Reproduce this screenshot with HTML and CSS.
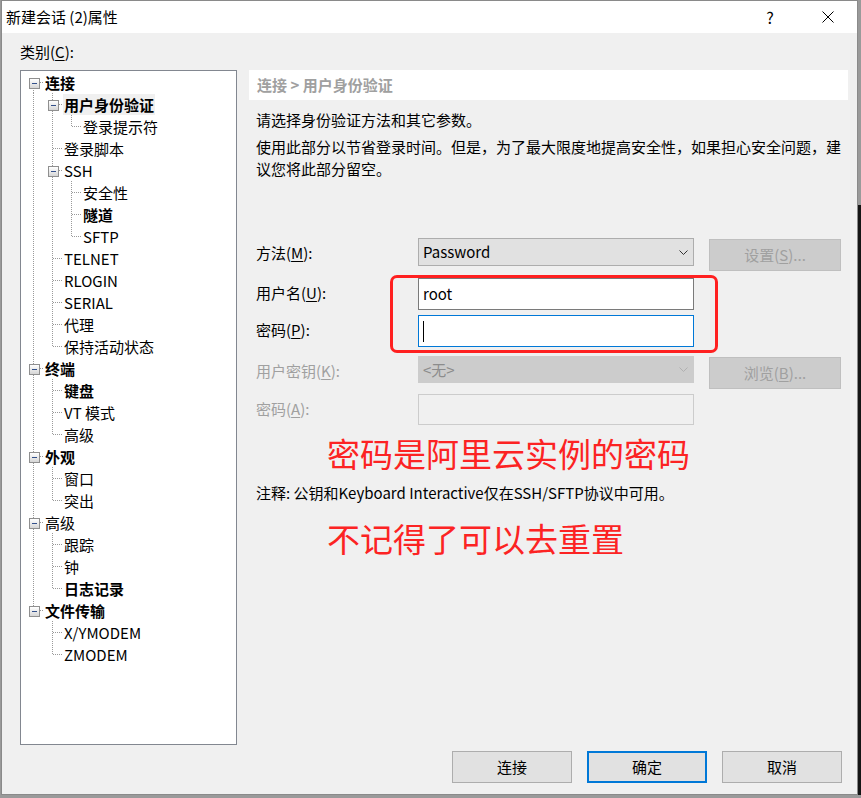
FILE: index.html
```html
<!DOCTYPE html>
<html lang="zh-CN">
<head>
    <meta charset="UTF-8">
    <title>新建会话 (2)属性</title>
    <link rel="stylesheet" href="styles.css">
</head>
<body>

<div class="window">
    <div class="titlebar">
        <div class="title">新建会话 (2)属性</div>
        <div class="capbtn">?</div>
        <div class="capbtn">
            <svg width="12" height="12" viewBox="0 0 12 12"><path d="M0.5 0.5 L11.5 11.5 M11.5 0.5 L0.5 11.5" stroke="#000" stroke-width="1" fill="none"/></svg>
        </div>
    </div>

    <div class="main">
        <div class="cat_label">类别(<u>C</u>):</div>
        <div></div>

        <div class="tree">
            <div class="row"><span class="cell first"><b class="box"></b></span><span class="t bold">连接</span></div>
            <div class="row"><span class="cell pipe"></span><span class="cell tee"><b class="box"></b></span><span class="t bold sel">用户身份验证</span></div>
            <div class="row"><span class="cell pipe"></span><span class="cell pipe"></span><span class="cell elbow"></span><span class="t">登录提示符</span></div>
            <div class="row"><span class="cell pipe"></span><span class="cell tee"></span><span class="t">登录脚本</span></div>
            <div class="row"><span class="cell pipe"></span><span class="cell tee"><b class="box"></b></span><span class="t">SSH</span></div>
            <div class="row"><span class="cell pipe"></span><span class="cell pipe"></span><span class="cell tee"></span><span class="t">安全性</span></div>
            <div class="row"><span class="cell pipe"></span><span class="cell pipe"></span><span class="cell tee"></span><span class="t bold">隧道</span></div>
            <div class="row"><span class="cell pipe"></span><span class="cell pipe"></span><span class="cell elbow"></span><span class="t">SFTP</span></div>
            <div class="row"><span class="cell pipe"></span><span class="cell tee"></span><span class="t">TELNET</span></div>
            <div class="row"><span class="cell pipe"></span><span class="cell tee"></span><span class="t">RLOGIN</span></div>
            <div class="row"><span class="cell pipe"></span><span class="cell tee"></span><span class="t">SERIAL</span></div>
            <div class="row"><span class="cell pipe"></span><span class="cell tee"></span><span class="t">代理</span></div>
            <div class="row"><span class="cell pipe"></span><span class="cell elbow"></span><span class="t">保持活动状态</span></div>
            <div class="row"><span class="cell tee"><b class="box"></b></span><span class="t bold">终端</span></div>
            <div class="row"><span class="cell pipe"></span><span class="cell tee"></span><span class="t bold">键盘</span></div>
            <div class="row"><span class="cell pipe"></span><span class="cell tee"></span><span class="t">VT 模式</span></div>
            <div class="row"><span class="cell pipe"></span><span class="cell elbow"></span><span class="t">高级</span></div>
            <div class="row"><span class="cell tee"><b class="box"></b></span><span class="t bold">外观</span></div>
            <div class="row"><span class="cell pipe"></span><span class="cell tee"></span><span class="t">窗口</span></div>
            <div class="row"><span class="cell pipe"></span><span class="cell elbow"></span><span class="t">突出</span></div>
            <div class="row"><span class="cell tee"><b class="box"></b></span><span class="t">高级</span></div>
            <div class="row"><span class="cell pipe"></span><span class="cell tee"></span><span class="t">跟踪</span></div>
            <div class="row"><span class="cell pipe"></span><span class="cell tee"></span><span class="t">钟</span></div>
            <div class="row"><span class="cell pipe"></span><span class="cell elbow"></span><span class="t bold">日志记录</span></div>
            <div class="row"><span class="cell elbow"><b class="box"></b></span><span class="t bold">文件传输</span></div>
            <div class="row"><span class="cell"></span><span class="cell tee"></span><span class="t">X/YMODEM</span></div>
            <div class="row"><span class="cell"></span><span class="cell elbow"></span><span class="t">ZMODEM</span></div>
        </div>

        <div class="panel">
            <div class="panel_head">连接 &gt; 用户身份验证</div>
            <div class="intro">请选择身份验证方法和其它参数。</div>
            <div class="desc">使用此部分以节省登录时间。但是，为了最大限度地提高安全性，如果担心安全问题，建议您将此部分留空。</div>

            <div class="form">
                <div class="lbl">方法(<u>M</u>):</div>
                <div class="combo">Password
                    <svg class="chev" width="9" height="5" viewBox="0 0 9 5"><path d="M0.5 0.5 L4.5 4.5 L8.5 0.5" stroke="#333" fill="none"/></svg>
                </div>
                <div class="btn off">设置(<u>S</u>)...</div>

                <div class="lbl">用户名(<u>U</u>):</div>
                <div class="field">root</div>
                <div></div>

                <div class="lbl">密码(<u>P</u>):</div>
                <div class="field focus"><span class="caret"></span></div>
                <div></div>

                <div class="lbl off_txt">用户密钥(<u>K</u>):</div>
                <div class="combo dis">&lt;无&gt;
                    <svg class="chev" width="9" height="5" viewBox="0 0 9 5"><path d="M0.5 0.5 L4.5 4.5 L8.5 0.5" stroke="#b0b0b0" fill="none"/></svg>
                </div>
                <div class="btn off">浏览(<u>B</u>)...</div>

                <div class="lbl off_txt">密码(<u>A</u>):</div>
                <div class="field dis"></div>
                <div></div>

                <div class="mark"></div>
            </div>

            <div class="red_note first_note">密码是阿里云实例的密码</div>
            <div class="note">注释: 公钥和Keyboard Interactive仅在SSH/SFTP协议中可用。</div>
            <div class="red_note">不记得了可以去重置</div>
        </div>
    </div>

    <div class="footer">
        <div class="btn">连接</div>
        <div class="btn default">确定</div>
        <div class="btn">取消</div>
    </div>
</div>

</body>
</html>
```

FILE: styles.css
```css
body{
    margin: 0;
    background:
        linear-gradient(to bottom, #9a9a9a 0 205px, #151515 205px) no-repeat right top / 3px 100%,
        #9a9a9a;
    font-family: "Noto Sans CJK SC", "Noto Sans", sans-serif;
    font-size: 15px;
    color: #000;
}
.window{
    margin-left: 1px;
    width: 855px;
    height: 793px;
    border: 1px solid #8a8a8a;
    background-color: #f0f0f0;
    display: flex;
    flex-direction: column;
}
.titlebar{
    height: 32px;
    background-color: #fff;
    display: flex;
    align-items: center;
}
.title{
    flex: 1;
    padding-left: 4px;
    line-height: 30px;
}
.capbtn{
    width: 58px;
    height: 32px;
    display: flex;
    align-items: center;
    justify-content: center;
    font-size: 16px;
}
.main{
    display: grid;
    grid-template-columns: 217px 599px;
    grid-template-rows: 22px 675px;
    column-gap: 12px;
    row-gap: 6px;
    padding: 9px 0 0 18px;
}
.cat_label{
    line-height: 20px;
}
u{
    text-decoration: underline;
    text-underline-offset: 2px;
}

/* tree */
.tree{
    --v: repeating-linear-gradient(to bottom, #9a9a9a 0 1px, transparent 1px 2px);
    --h: repeating-linear-gradient(to right, #9a9a9a 0 1px, transparent 1px 2px);
    border: 1px solid #828790;
    background-color: #fff;
    padding: 0 0 0 3px;
}
.row{
    display: flex;
    align-items: center;
    height: 22px;
}
.cell{
    flex: none;
    width: 19px;
    height: 22px;
    display: flex;
    align-items: center;
    background-repeat: no-repeat;
}
.pipe{
    background-image: var(--v);
    background-size: 1px 22px;
    background-position: 9px 0;
}
.tee{
    background-image: var(--v), var(--h);
    background-size: 1px 22px, 10px 1px;
    background-position: 9px 0, 10px 11px;
}
.elbow{
    background-image: var(--v), var(--h);
    background-size: 1px 11px, 10px 1px;
    background-position: 9px 0, 10px 11px;
}
.first{
    background-image: var(--v), var(--h);
    background-size: 1px 11px, 10px 1px;
    background-position: 9px 11px, 10px 11px;
}
.box{
    width: 9px;
    height: 9px;
    margin: 2px 0 0 5px;
    border: 1px solid #8f8f8f;
    background:
        linear-gradient(#33508a, #33508a) no-repeat 2px 4px / 5px 1px,
        linear-gradient(#ffffff, #d6d6d6);
}
.t{
    margin-left: 1px;
    padding: 0 1px;
    line-height: 21px;
    white-space: nowrap;
}
.bold{
    font-weight: bold;
}
.sel{
    background-color: #f0f0f0;
}

/* right panel */
.panel{
    display: flex;
    flex-direction: column;
}
.panel_head{
    height: 30px;
    line-height: 29px;
    padding-left: 8px;
    background-color: #fff;
    color: #a0a0a0;
    font-weight: bold;
}
.intro{
    margin: 9px 0 0 7px;
    line-height: 21px;
}
.desc{
    margin: 6px 0 0 7px;
    width: 590px;
    line-height: 22px;
}
.form{
    position: relative;
    margin: 58px 0 0 7px;
    display: grid;
    grid-template-columns: 147px 276px 132px;
    grid-template-rows: 40px 37px 41px 38px 31px;
    column-gap: 15px;
    align-items: start;
}
.lbl{
    line-height: 30px;
}
.off_txt{
    color: #a0a0a0;
}
.combo{
    height: 28px;
    box-sizing: border-box;
    border: 1px solid #adadad;
    background-color: #e1e1e1;
    padding-left: 4px;
    line-height: 26px;
    display: flex;
    align-items: center;
    justify-content: space-between;
}
.combo.dis{
    height: 27px;
    border-color: #cccccc;
    background-color: #cccccc;
    color: #8c8c8c;
}
.chev{
    margin-right: 5px;
}
.field{
    height: 32px;
    box-sizing: border-box;
    border: 1px solid #7a7a7a;
    background-color: #fff;
    padding-left: 4px;
    line-height: 28px;
    display: flex;
    align-items: center;
}
.field.focus{
    border-color: #0078d7;
}
.field.dis{
    height: 31px;
    border-color: #cccccc;
    background-color: #f0f0f0;
}
.caret{
    width: 1px;
    height: 21px;
    background-color: #000;
}
.btn{
    height: 32px;
    box-sizing: border-box;
    border: 1px solid #adadad;
    background-color: #e1e1e1;
    text-align: center;
    line-height: 30px;
}
.form .btn{
    margin-top: 1px;
}
.btn.off{
    border-color: #bfbfbf;
    background-color: #cccccc;
    color: #a0a0a0;
}
.mark{
    position: absolute;
    left: 134px;
    top: 37px;
    width: 328px;
    height: 78px;
    box-sizing: border-box;
    border: 3px solid #ff2020;
    border-radius: 7px;
}
.red_note{
    margin: 12px 0 0 78px;
    color: #fc2323;
    font-size: 33px;
    line-height: 44px;
}
.first_note{
    margin-top: 6px;
}
.note{
    margin: 7px 0 0 7px;
    line-height: 22px;
}

/* footer */
.footer{
    display: flex;
    justify-content: flex-end;
    gap: 15px;
    margin-top: 6px;
    padding-right: 15px;
}
.footer .btn{
    width: 120px;
}
.btn.default{
    border: 2px solid #0078d7;
    line-height: 28px;
}
```
